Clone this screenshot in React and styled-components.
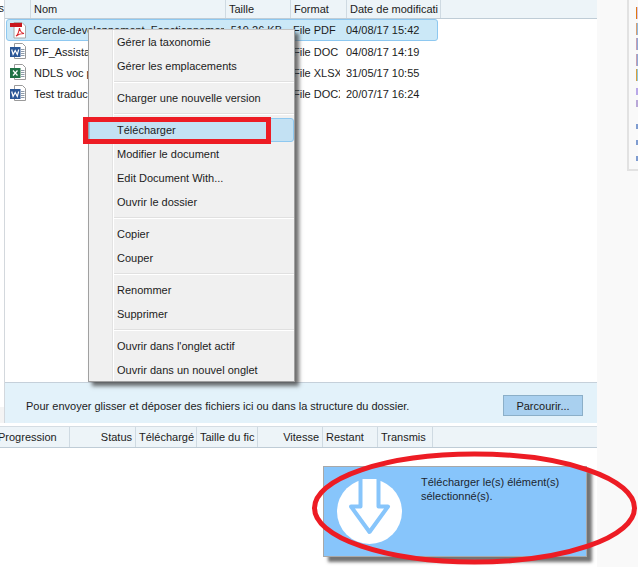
import React from "react";
import styled, { createGlobalStyle } from "styled-components";

const GlobalStyle = createGlobalStyle`
  html, body { margin: 0; padding: 0; background: #fff; }
  body { font-family: "Liberation Sans", Arial, sans-serif; font-size: 11px; color: #1c1c1c; }
  #root { width: 638px; height: 567px; overflow: hidden; }
`;

const Page = styled.div`
  position: relative;
  display: flex;
  width: 638px;
  height: 567px;
  overflow: hidden;
`;

const Gutter = styled.div`
  width: 5px;
  height: 423px;
  flex: none;
  display: flex;
  flex-direction: column;
  justify-content: space-between;
  box-sizing: border-box;
  border-right: 1px solid #d3d8dd;
`;

const GutterLabel = styled.div`
  height: 18px;
  line-height: 17px;
  overflow: hidden;
  direction: rtl;
`;

const GutterPatch = styled.div`
  height: 16px;
  background: #f4f4f4;
`;

const Main = styled.div`
  width: 592px;
  flex: none;
  display: flex;
  flex-direction: column;
`;

const Side = styled.div`
  flex: 1;
  height: 567px;
  background: #f9f9f9;
`;

const HeaderRow = styled.div`
  display: flex;
  height: 19px;
  box-sizing: border-box;
  background: #edf4f8;
  border-bottom: 1px solid #bfccd6;
`;

const HeaderCell = styled.div`
  width: ${(p) => p.$w}px;
  flex: none;
  padding: 0 3px;
  box-sizing: border-box;
  line-height: 18px;
  white-space: nowrap;
  overflow: hidden;
  border-right: 1px solid #cfdae2;
  text-align: ${(p) => p.$align || "left"};
`;

const FileList = styled.div`
  height: 363px;
  box-sizing: border-box;
`;

const FileRow = styled.div`
  display: flex;
  align-items: center;
  height: ${(p) => (p.$selected ? 22 : 21)}px;
  margin-left: 1px;
  width: 432px;
  box-sizing: border-box;
  border: 1px solid ${(p) => (p.$selected ? "#8ec8f0" : "transparent")};
  border-radius: 3px;
  background: ${(p) => (p.$selected ? "#cbe8f7" : "transparent")};
`;

const IconCell = styled.div`
  width: 27px;
  flex: none;
  display: flex;
  padding-left: 3px;
  box-sizing: border-box;
`;

const FileCell = styled.div`
  width: ${(p) => p.$w}px;
  flex: none;
  margin-right: ${(p) => p.$gap || 0}px;
  padding-right: ${(p) => p.$pad || 0}px;
  box-sizing: border-box;
  text-align: ${(p) => p.$align || "left"};
  white-space: nowrap;
  overflow: hidden;
`;

const DropBar = styled.div`
  height: 41px;
  display: flex;
  align-items: center;
  justify-content: space-between;
  padding: 5px 14px 0 21px;
  background: #e3f2fa;
  border-top: 1px solid #c5d0da;
  box-sizing: border-box;
`;

const BrowseButton = styled.button`
  width: 80px;
  height: 21px;
  padding: 0;
  font: inherit;
  color: inherit;
  background: #a9d0ef;
  border: 1px solid #8bafc8;
`;

const TransferHeader = styled.div`
  display: flex;
  height: 22px;
  margin: 3px 0 0 -5px;
  width: 597px;
  background: #edf4f8;
  border-top: 1px solid #d5dde3;
  border-bottom: 1px solid #bfccd6;
  box-sizing: border-box;
`;

const TransferCell = styled(HeaderCell)`
  line-height: 20px;
  text-indent: ${(p) => p.$indent || 0}px;
`;

const ContextMenu = styled.div`
  position: absolute;
  left: 88px;
  top: 29px;
  width: 207px;
  height: 353px;
  box-sizing: border-box;
  background: #f0f0f0;
  border: 1px solid #a0a0a0;
  border-top-color: #c5c5c5;
  box-shadow: 4px 4px 4px rgba(60, 60, 60, 0.75);

  &::before {
    content: "";
    position: absolute;
    left: 23px;
    top: 0;
    bottom: 0;
    width: 1px;
    background: #e3e3e3;
    border-right: 1px solid #fff;
  }
`;

const MenuItem = styled.div`
  position: relative;
  height: 24px;
  line-height: 24px;
  padding-left: 28px;
  box-sizing: border-box;
  white-space: nowrap;
  ${(p) =>
    p.$active &&
    `
    background: #c3e1f3;
    border: 1px solid #8ec8f0;
    border-radius: 3px;
    line-height: 22px;
    padding-left: 27px;
  `}
`;

const MenuSeparator = styled.div`
  height: 2px;
  margin: 3px 0 3px 24px;
  background: #e0e0e0;
  border-bottom: 1px solid #fff;
  box-sizing: border-box;
`;

const Tooltip = styled.div`
  position: absolute;
  left: 323px;
  top: 466px;
  width: 264px;
  height: 91px;
  box-sizing: border-box;
  display: flex;
  background: #87c5fb;
  border: 1px solid #a8a8a8;
  box-shadow: 5px 5px 3px rgba(70, 70, 70, 0.75);
`;

const TooltipIcon = styled.div`
  width: 97px;
  flex: none;
  padding: 12px 0 0 13px;
  box-sizing: border-box;
`;

const TooltipText = styled.div`
  width: 160px;
  line-height: 14px;
  padding-top: 8px;
  color: #1c2530;
`;

const Annotation = styled.svg`
  position: absolute;
  left: 0;
  top: 0;
  pointer-events: none;
`;

const SidePanel = styled.div`
  margin-left: 30px;
  height: 171px;
  box-sizing: border-box;
  padding: 7px 0 0 7px;
  border-left: 2px solid #e2e2e2;
  border-bottom: 2px solid #e2e2e2;
  display: flex;
  flex-direction: column;
  gap: 3.5px;
`;

const Chip = styled.span`
  display: block;
  width: 12px;
  height: 12px;
  flex: none;
  box-sizing: border-box;
  border-left: 1px solid ${(p) => p.$c};
  background: ${(p) => p.$fill};
`;

const SideMark = styled.span`
  display: block;
  width: 2px;
  height: ${(p) => p.$h}px;
  flex: none;
  margin-top: ${(p) => p.$m}px;
  background: ${(p) => p.$c};
`;

function PdfIcon() {
  return (
    <svg width="17" height="17" viewBox="0 0 17 17">
      <path d="M4 .5h8l3.5 3.5v12H4z" fill="#fff" stroke="#a8a8a8" />
      <rect x="0" y="1" width="12" height="4" fill="#c8171e" />
      <path d="M6 14c2-1 3-5 3.5-8 .5 3 2 5 4.5 5.5-3 0-6 1-8 2.5z" fill="none" stroke="#d8262c" strokeWidth="1.1" />
    </svg>
  );
}

function OfficeIcon({ color, letter }) {
  return (
    <svg width="17" height="17" viewBox="0 0 17 17">
      <path d="M4.5 .5h8l3 3v12h-11z" fill="#fff" stroke="#9a9a9a" />
      <path d="M11 6.5h3.5M11 8.5h3.5M11 10.5h3.5M11 12.5h3.5" stroke="#8c9aa8" />
      <rect x="0" y="4" width="10.5" height="10" fill={color} />
      <path d={letter === "x" ? "M3 6.5l4.5 5M7.5 6.5l-4.5 5" : "M1.7 6.5l1.4 5 2.1-4 2.1 4 1.4-5"} fill="none" stroke="#fff" strokeWidth="1.2" />
    </svg>
  );
}

const files = [
  { icon: <PdfIcon />, name: "Cercle-developpement_Fonctionnement", size: "519.26 KB", format: "File PDF", date: "04/08/17 15:42", selected: true },
  { icon: <OfficeIcon color="#2b5797" letter="w" />, name: "DF_Assistant", format: "File DOC", date: "04/08/17 14:19" },
  { icon: <OfficeIcon color="#1f7244" letter="x" />, name: "NDLS voc p", format: "File XLSX", date: "31/05/17 10:55" },
  { icon: <OfficeIcon color="#2b5797" letter="w" />, name: "Test traduc", format: "File DOCX", date: "20/07/17 16:24" },
];

const menuGroups = [
  [{ label: "Gérer la taxonomie" }, { label: "Gérer les emplacements" }],
  [{ label: "Charger une nouvelle version" }],
  [{ label: "Télécharger", active: true }, { label: "Modifier le document" }, { label: "Edit Document With..." }, { label: "Ouvrir le dossier" }],
  [{ label: "Copier" }, { label: "Couper" }],
  [{ label: "Renommer" }, { label: "Supprimer" }],
  [{ label: "Ouvrir dans l'onglet actif" }, { label: "Ouvrir dans un nouvel onglet" }],
];

const transferColumns = [
  { label: "Progression", w: 70, indent: -5 },
  { label: "Status", w: 66, align: "right" },
  { label: "Téléchargé", w: 61 },
  { label: "Taille du fic", w: 61 },
  { label: "Vitesse", w: 65, align: "right" },
  { label: "Restant", w: 55 },
  { label: "Transmis", w: 55 },
];

const chips = [
  { c: "#e07a10", fill: "#d9c4e8" },
  { c: "#d9a070", fill: "#8fb8e0" },
  { c: "#c8a0b0", fill: "#8fa8d8" },
  { c: "#c8a0b0", fill: "#8fa8d8" },
  { c: "#d8a040", fill: "#8fc8e0" },
];

const marks = [
  { c: "#b9a8e8", h: 7, m: 3 },
  { c: "#b9a8d8", h: 7, m: 2 },
  { c: "#7f9cd0", h: 5, m: 13 },
  { c: "#7f9cd0", h: 5, m: 8 },
  { c: "#7f9cd0", h: 5, m: 7 },
];

export default function App() {
  return (
    <Page>
      <GlobalStyle />
      <Gutter>
        <GutterLabel>s</GutterLabel>
        <GutterPatch />
      </Gutter>
      <Main>
        <HeaderRow>
          <HeaderCell $w={26} />
          <HeaderCell $w={195}>Nom</HeaderCell>
          <HeaderCell $w={65}>Taille</HeaderCell>
          <HeaderCell $w={56}>Format</HeaderCell>
          <HeaderCell $w={94}>Date de modificati</HeaderCell>
        </HeaderRow>
        <FileList>
          {files.map((f) => (
            <FileRow key={f.date} $selected={f.selected}>
              <IconCell>{f.icon}</IconCell>
              <FileCell $w={190}>{f.name}</FileCell>
              <FileCell $w={69} $align="right" $pad={11}>{f.size}</FileCell>
              <FileCell $w={47} $gap={6}>{f.format}</FileCell>
              <FileCell $w={90}>{f.date}</FileCell>
            </FileRow>
          ))}
        </FileList>
        <DropBar>
          <span>Pour envoyer glisser et déposer des fichiers ici ou dans la structure du dossier.</span>
          <BrowseButton>Parcourir...</BrowseButton>
        </DropBar>
        <TransferHeader>
          {transferColumns.map((c) => (
            <TransferCell key={c.label} $w={c.w} $align={c.align} $indent={c.indent}>
              {c.label}
            </TransferCell>
          ))}
        </TransferHeader>
      </Main>
      <Side>
        <SidePanel>
          {chips.map((chip, i) => (
            <Chip key={i} $c={chip.c} $fill={chip.fill} />
          ))}
          {marks.map((mark, i) => (
            <SideMark key={i} $c={mark.c} $h={mark.h} $m={mark.m} />
          ))}
        </SidePanel>
      </Side>
      <ContextMenu>
        {menuGroups.map((group, i) => (
          <React.Fragment key={group[0].label}>
            {i > 0 && <MenuSeparator />}
            {group.map((item) => (
              <MenuItem key={item.label} $active={item.active}>
                {item.label}
              </MenuItem>
            ))}
          </React.Fragment>
        ))}
      </ContextMenu>
      <Tooltip>
        <TooltipIcon>
          <svg width="65" height="65" viewBox="0 0 65 65" style={{ display: "block" }}>
            <circle cx="32.5" cy="32.5" r="32.5" fill="#fff" />
            <path d="M23.5 0v27.5H14L32.5 53 51 27.5H41.5V0" fill="#fff" stroke="#87c5fb" strokeWidth="4" strokeLinejoin="round" />
          </svg>
        </TooltipIcon>
        <TooltipText>
          Télécharger le(s) élément(s)
          <br />
          sélectionné(s).
        </TooltipText>
      </Tooltip>
      <Annotation width="638" height="567" viewBox="0 0 638 567">
        <rect x="85.5" y="119.5" width="183" height="22" fill="none" stroke="#ed1c24" strokeWidth="5" />
        <ellipse cx="474.5" cy="508" rx="160" ry="54" fill="none" stroke="#ed1c24" strokeWidth="5" />
      </Annotation>
    </Page>
  );
}
